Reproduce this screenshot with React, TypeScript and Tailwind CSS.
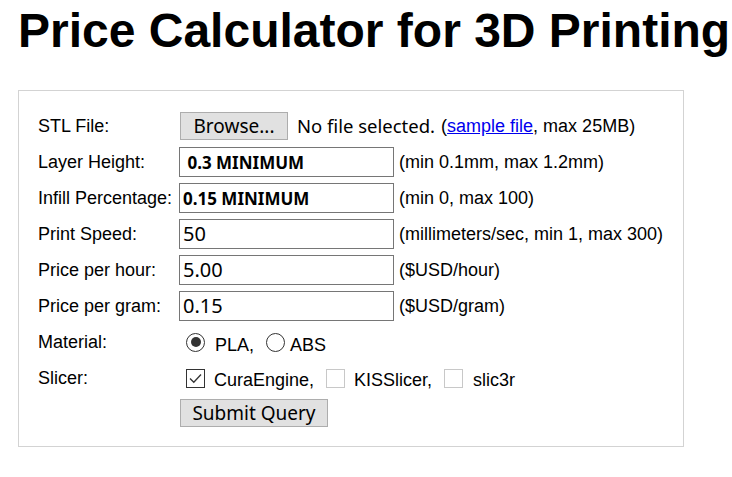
const sys = "font-['Noto_Sans',sans-serif]";

function Row({ label, children }: { label: string; children: React.ReactNode }) {
  return (
    <div className="flex h-[36px] items-center">
      <div className="w-[141px] shrink-0">{label}</div>
      <div className="flex items-center">{children}</div>
    </div>
  );
}

function Field({ value, bold }: { value: string; bold?: boolean }) {
  return (
    <input
      readOnly
      value={value}
      className={`${sys} h-[30px] w-[215px] border border-[#767676] bg-white px-[3px] text-black outline-none ${
        bold ? "text-[17px] font-bold" : "text-[20px]"
      }`}
    />
  );
}

function Hint({ children }: { children: React.ReactNode }) {
  return <span className="ml-[5px]">{children}</span>;
}

function Radio({ checked }: { checked?: boolean }) {
  return (
    <span className="flex h-[19px] w-[19px] items-center justify-center rounded-full border border-[#333] bg-white">
      {checked && <span className="h-[10px] w-[10px] rounded-full bg-[#333]" />}
    </span>
  );
}

function Check({ checked }: { checked?: boolean }) {
  return (
    <span
      className={`flex h-[19px] w-[19px] items-center justify-center border bg-white ${
        checked ? "border-[#333]" : "border-[#c8c8c8]"
      }`}
    >
      {checked && (
        <svg width="15" height="15" viewBox="0 0 15 15">
          <path d="M2 7.5 L5.8 11.3 L13 3.5" fill="none" stroke="#333" strokeWidth="1.3" />
        </svg>
      )}
    </span>
  );
}

export default function App() {
  return (
    <div className="min-h-[477px] bg-white font-['Liberation_Sans',Arial,sans-serif] text-[18px] text-black">
      <h1 className="pl-[18px] pt-[7px] text-[48px] font-bold leading-[48px]">
        Price Calculator for 3D Printing
      </h1>
      <div className="ml-[18px] mt-[35px] w-[666px] border border-[#d3d3d3] pb-[16px] pl-[19px] pt-[17px]">
        <Row label="STL File:">
          <button
            className={`${sys} ml-[1px] h-[28px] w-[108px] border border-[#adadad] bg-[#e1e1e1] text-[19px] leading-none`}
          >
            Browse...
          </button>
          <span className={`${sys} ml-[9px] text-[18.5px]`}>No file selected.</span>
          <span className="ml-[6px]">
            (<a className="text-[#0000ee] underline">sample file</a>, max 25MB)
          </span>
        </Row>
        <Row label="Layer Height:">
          <Field value=" 0.3 MINIMUM" bold />
          <Hint>(min 0.1mm, max 1.2mm)</Hint>
        </Row>
        <Row label="Infill Percentage:">
          <Field value="0.15 MINIMUM" bold />
          <Hint>(min 0, max 100)</Hint>
        </Row>
        <Row label="Print Speed:">
          <Field value="50" />
          <Hint>(millimeters/sec, min 1, max 300)</Hint>
        </Row>
        <Row label="Price per hour:">
          <Field value="5.00" />
          <Hint>($USD/hour)</Hint>
        </Row>
        <Row label="Price per gram:">
          <Field value="0.15" />
          <Hint>($USD/gram)</Hint>
        </Row>
        <Row label="Material:">
          <span className="ml-[7px]">
            <Radio checked />
          </span>
          <span className="ml-[10px] mt-[6px]">PLA,</span>
          <span className="ml-[12px]">
            <Radio />
          </span>
          <span className="ml-[5px] mt-[6px]">ABS</span>
        </Row>
        <Row label="Slicer:">
          <span className="ml-[7px]">
            <Check checked />
          </span>
          <span className="ml-[9px] mt-[5px]">CuraEngine,</span>
          <span className="ml-[12px]">
            <Check />
          </span>
          <span className="ml-[9px] mt-[5px]">KISSlicer,</span>
          <span className="ml-[12px]">
            <Check />
          </span>
          <span className="ml-[10px] mt-[5px]">slic3r</span>
        </Row>
        <div className="flex h-[34px] items-center pl-[142px]">
          <button
            className={`${sys} h-[28px] w-[148px] border border-[#adadad] bg-[#e1e1e1] text-[19px] leading-none`}
          >
            Submit Query
          </button>
        </div>
      </div>
    </div>
  );
}
